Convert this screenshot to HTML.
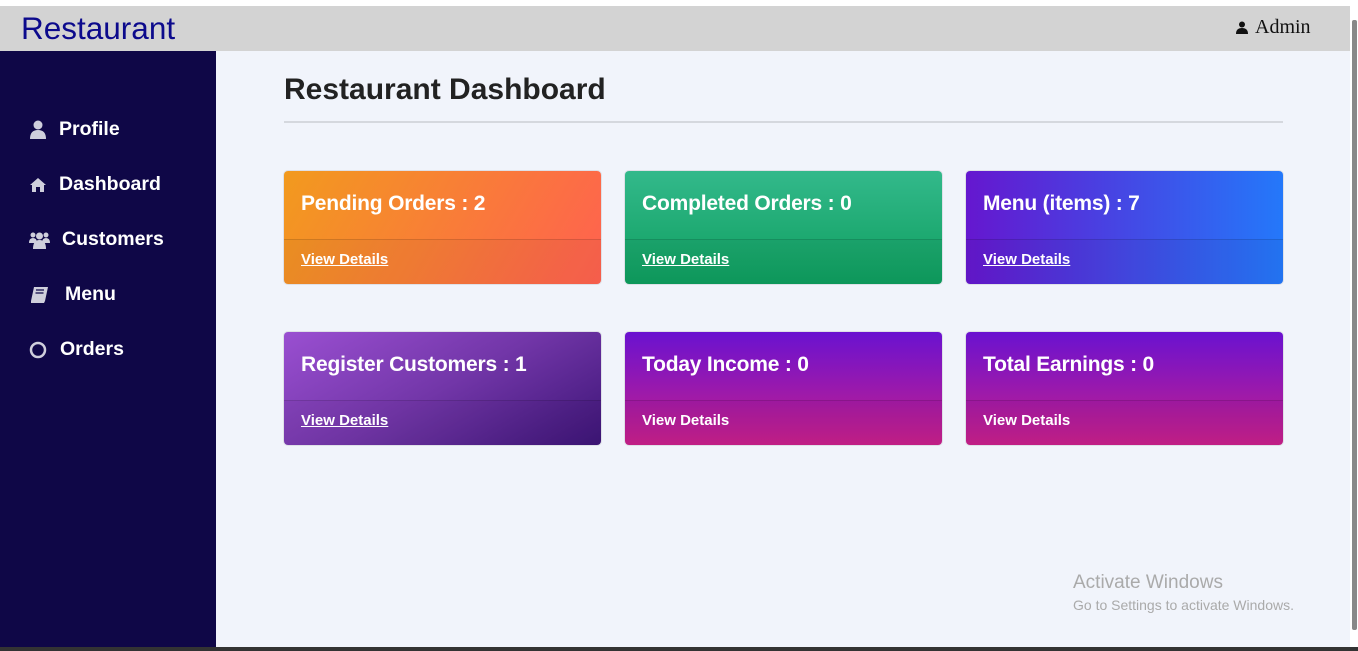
<!DOCTYPE html>
<html><head><style>
*{margin:0;padding:0;box-sizing:border-box}
body{width:1358px;height:651px;overflow:hidden;background:#f1f4fb;font-family:"Liberation Sans",sans-serif;position:relative}
.top{position:absolute;left:0;top:0;width:1358px;height:6px;background:#fff}
.hdr{position:absolute;left:0;top:6px;width:1350px;height:45px;background:#d3d3d3}
.logo{position:absolute;left:21px;top:4px;font-size:31.5px;color:#0c0a8c}
.admin{position:absolute;left:1236px;top:10px;font-family:"Liberation Serif",serif;font-size:20px;color:#111}
.side{position:absolute;left:0;top:51px;width:216px;height:596px;background:#0f0747}
.nav{position:absolute;left:29px;color:#fff;font-weight:bold;font-size:19.5px;display:flex;align-items:center}
.nav svg{margin-right:12px}
.sb{position:absolute;left:1350px;top:6px;width:8px;height:641px;background:#fff}
.sb div{position:absolute;left:2px;top:14px;width:5px;height:610px;background:#888;border-radius:2px}
.bot{position:absolute;left:0;top:647px;width:1358px;height:4px;background:#333}
h1{position:absolute;left:284px;top:73px;font-size:30px;color:#222;font-weight:bold}
.hr{position:absolute;left:284px;top:121px;width:999px;height:2px;background:#d5d8de}
.card{position:absolute;width:317px;height:113px;border-radius:4px;color:#fff;overflow:hidden;box-shadow:0 0 0 1px rgba(0,0,0,.08)}
.card .t{position:absolute;left:17px;top:21px;font-size:21px;font-weight:bold;letter-spacing:-.2px}
.card .f{position:absolute;left:0;top:68px;width:100%;height:45px;background:rgba(0,0,0,.04);border-top:1px solid rgba(0,0,0,.12)}
.card .f span{position:absolute;left:17px;top:11px;font-size:15px;font-weight:bold}
.u{text-decoration:underline}
.wm{position:absolute;left:1073px;color:#aaa}
</style></head><body>
<div class="top"></div>
<div class="hdr"><div class="logo">Restaurant</div>
<div class="admin"><svg width="12" height="13" viewBox="0 0 12 13" style="vertical-align:-1px;margin-right:7px"><circle cx="6" cy="3.5" r="3" fill="#111"/><path d="M0 13 Q0 7 6 7 Q12 7 12 13Z" fill="#111"/></svg>Admin</div></div>
<div class="side">
<div class="nav" style="top:67px"><svg width="18" height="20" viewBox="0 0 18 20"><circle cx="9" cy="5" r="4.5" fill="#cfcfdc"/><path d="M1 19 Q1 10 9 10 Q17 10 17 19Z" fill="#cfcfdc"/></svg>Profile</div>
<div class="nav" style="top:122px"><svg width="18" height="16" viewBox="0 0 18 16"><path d="M9 1 L17 8 L15 8 L15 15 L11 15 L11 10 L7 10 L7 15 L3 15 L3 8 L1 8Z" fill="#cfcfdc"/></svg>Dashboard</div>
<div class="nav" style="top:177px"><svg width="21" height="18" viewBox="0 0 21 18"><circle cx="4" cy="4" r="2.5" fill="#cfcfdc"/><circle cx="17" cy="4" r="2.5" fill="#cfcfdc"/><circle cx="10.5" cy="5" r="3.5" fill="#cfcfdc"/><path d="M0 12 Q0 7 4 7 Q8 7 8 12Z M13 12 Q13 7 17 7 Q21 7 21 12Z M4 18 Q4 9 10.5 9 Q17 9 17 18Z" fill="#cfcfdc"/></svg>Customers</div>
<div class="nav" style="top:232px"><svg width="22" height="18" viewBox="0 0 22 18" style="margin-right:14px"><path d="M5 1 L19 1 L16 15 L2 15Z M2 15 L2 17 L15 17 L16 15" fill="#cfcfdc"/><path d="M7 4 L15 4 M6.5 7 L14.5 7" stroke="#0f0747" stroke-width="1.3"/></svg>Menu</div>
<div class="nav" style="top:287px"><svg width="19" height="18" viewBox="0 0 19 18"><circle cx="9" cy="9" r="7" fill="none" stroke="#cfcfdc" stroke-width="2.5"/></svg>Orders</div>
</div>
<h1>Restaurant Dashboard</h1><div class="hr"></div>
<div class="card" style="left:284px;top:171px;background:linear-gradient(120deg,#f29a1e,#ff6150)"><div class="t">Pending Orders : 2</div><div class="f"><span class="u">View Details</span></div></div>
<div class="card" style="left:625px;top:171px;background:linear-gradient(180deg,#33b98b,#0e9e5e)"><div class="t">Completed Orders : 0</div><div class="f"><span class="u">View Details</span></div></div>
<div class="card" style="left:966px;top:171px;background:linear-gradient(90deg,#6517cf,#2478fa)"><div class="t">Menu (items) : 7</div><div class="f"><span class="u">View Details</span></div></div>
<div class="card" style="left:284px;top:332px;background:linear-gradient(150deg,#9a4fd1,#7236a8 50%,#3d1577)"><div class="t">Register Customers : 1</div><div class="f"><span class="u">View Details</span></div></div>
<div class="card" style="left:625px;top:332px;background:linear-gradient(180deg,#6a12d0,#c8208a)"><div class="t">Today Income : 0</div><div class="f"><span>View Details</span></div></div>
<div class="card" style="left:966px;top:332px;background:linear-gradient(180deg,#6a12d0,#c8208a)"><div class="t">Total Earnings : 0</div><div class="f"><span>View Details</span></div></div>
<div class="wm" style="top:572px;font-size:19px">Activate Windows</div>
<div class="wm" style="top:597px;font-size:14px">Go to Settings to activate Windows.</div>
<div class="sb"><div></div></div>
<div class="bot"></div>
</body></html>
